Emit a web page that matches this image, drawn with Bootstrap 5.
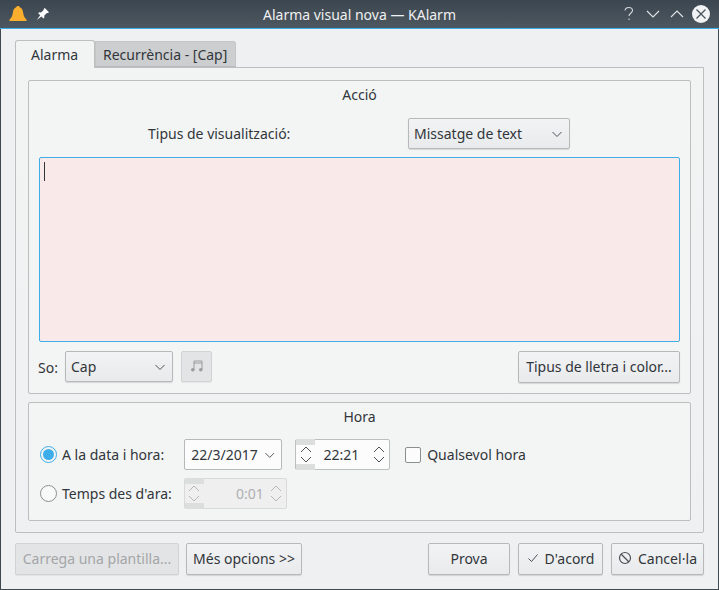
<!DOCTYPE html>
<html lang="ca">
<head>
  <meta charset="UTF-8" />
  <title>Alarma visual nova — KAlarm</title>
  <link href="https://cdn.jsdelivr.net/npm/bootstrap@5.3.0/dist/css/bootstrap.min.css" rel="stylesheet" />
  <style>
    html, body { height: 590px; overflow: hidden; }
    body { width: 719px; background: #eff0f1; color: #31363b; font-family: "Noto Sans", sans-serif; font-size: 14px; line-height: 19px; }
    .kwin { width: 719px; height: 590px; border: 1px solid #3f4952; border-top: 0; background: #eff0f1; }
    .titlebar { position: relative; height: 29px; margin: 0 -1px; padding: 0 9px 0 9px; background: linear-gradient(#3c4650, #4d5760); border-bottom: 1px solid #3daee9; color: #fcfcfc; }
    .titlebar-text { position: absolute; left: 0; right: 0; top: 5px; text-align: center; color: #eff0f1; }
    .tb-icons { gap: 9px; position: relative; }
    .dlg { padding: 11px 14px 0; }
    .nav-tabs.ktabs { border: 0; height: 28px; position: relative; z-index: 1; }
    .ktabs .nav-link { height: 26px; margin: 1px 0 0; padding: 3px 8px 0 7px; background: #cdcecf; border: 1px solid #c4c5c6; border-bottom: 1px solid #b9babb; border-radius: 0 3px 0 0; color: #31363b; font-size: 14px; line-height: 19px; }
    .ktabs .nav-link.active { height: 28px; margin: 0; width: 80px; padding: 4px 0 0 15px; background: #f2f3f3; border-color: #bcbebf; border-bottom: 0; border-radius: 3px 3px 0 0; color: #31363b; }
    .pane { height: 466px; margin-top: -1px; padding: 12px 12px 0; background: linear-gradient(#f2f3f3, #eff0f1); border: 1px solid #bcbebf; border-radius: 0 0 2px 2px; }
    .grp { background: #f3f4f4; border: 1px solid #bcbebf; border-radius: 2px; padding: 0 10px; }
    .grp-a { height: 314px; margin-bottom: 8px; }
    .grp-h { height: 119px; }
    .grp-title { height: 27px; padding-top: 4px; text-align: center; }
    .kbtn { display: flex; align-items: center; justify-content: center; height: 32px; padding: 0 0 2px; border: 1px solid #b6b8ba; border-radius: 2px; background: linear-gradient(#f2f3f4, #e9eaeb); box-shadow: 0 1px 1px rgba(0,0,0,.12); color: #31363b; font-size: 14px; line-height: 19px; gap: 6px; }
    .kbtn:disabled { color: #a3a6a9; opacity: 1; background: #e3e4e5; border-color: #d2d3d4; box-shadow: 0 1px 1px rgba(0,0,0,.06); }
    .kcombo { justify-content: space-between; padding: 0 6px 0 5px; height: 31px; }
    .kcombo.white { padding-left: 6px; background: #fcfcfc; box-shadow: none; }
    .vis-row { height: 31px; margin: 10px 0 8px; }
    .vis-label { width: 369px; padding-left: 109px; }
    .msg { height: 185px; padding: 4px; background: #fae9e9; border: 1px solid #3daee9; border-radius: 2px; }
    .caret-bar { width: 1px; height: 19px; background: #31363b; }
    .so-row { margin-top: 9px; height: 32px; }
    .so-label { width: 27px; margin-left: -1px; }
    .hora-row { height: 31px; }
    .kradio { width: 17px; height: 17px; margin-left: 1px; border: 1px solid #8b8e91; border-radius: 50%; background: #f8f9f9; flex: none; }
    .kradio.on { border-color: #3daee9; padding: 2px; background: #3daee9 content-box; }
    .radio-text { margin-left: 5px; }
    .kcheck { width: 16px; height: 16px; border: 1px solid #8b8e91; border-radius: 2px; background: #fcfcfc; flex: none; }
    .spin { position: relative; height: 31px; border: 1px solid #bcbebf; border-radius: 2px; background: #fcfcfc; color: #31363b; }
    .spin.off { background: #efefef; border-color: #d8d9da; color: #aeb0b2; }
    .spin-left { width: 19px; height: 31px; margin: -1px 0; display: flex; flex-direction: column; align-items: center; justify-content: center; gap: 3px; background: linear-gradient(#dcdddd 6px, transparent 6px, transparent 25px, #dcdddd 25px); }
    .spin-right { width: 20px; display: flex; flex-direction: column; align-items: center; gap: 3px; }
    .spin-value { flex: 1; text-align: right; }
    .mid-dot { margin: 0 .1px; }
    .foot { margin-top: 10px; }
  </style>
</head>
<body>
<div class="kwin">
  <!-- title bar -->
  <div class="titlebar d-flex align-items-center justify-content-between">
    <div class="titlebar-text">Alarma visual nova — KAlarm</div>
    <div class="d-flex align-items-center tb-icons">
      <svg width="18" height="18" viewBox="0 0 18 18"><path d="M9 1c1 0 1.500.6 1.700 1.200C13 3 13.800 5 14.200 8c.4 3 1.400 5 3.300 6.500V16H.5v-1.500C2.400 13 3.400 11 3.800 8 4.200 5 5 3 7.300 2.200 7.500 1.600 8 1 9 1z" fill="#fbae2d"/></svg>
      <svg width="14" height="14" viewBox="0 0 14 14"><path d="M8.800 1l4.200 4.200-1 .8-1-.1-2.700 2.700.1 1.900-1 1-2-2L.8 13l3.400-4.700-2-2 1-1 1.900.1L7.800 2.700 7.700 1.900z" fill="#fcfcfc"/></svg>
    </div>
    <div class="d-flex align-items-center" style="gap:8px;position:relative">
      <svg width="16" height="18" viewBox="0 0 16 18"><path d="M4 5.500c.3-2 1.900-3 3.800-3 2.100 0 3.700 1.200 3.700 3 0 2.700-3.500 2.700-3.500 5.500M8 13.500v1.500" fill="none" stroke="#d5d8da" stroke-width="1.100"/></svg>
      <svg width="16" height="16" viewBox="0 0 16 16"><path d="M2 5l6 6 6-6" fill="none" stroke="#e3e5e7" stroke-width="1.100"/></svg>
      <svg width="16" height="16" viewBox="0 0 16 16"><path d="M2 11l6-6 6 6" fill="none" stroke="#e3e5e7" stroke-width="1.100"/></svg>
      <svg width="18" height="18" viewBox="0 0 18 18" style="margin-left:-1px"><circle cx="9" cy="9" r="9" fill="#f2f3f4"/><path d="M4.500 4.500l9 9M13.500 4.500l-9 9" stroke="#4a545d" stroke-width="1.300"/></svg>
    </div>
  </div>

  <div class="dlg">
    <ul class="nav nav-tabs ktabs">
      <li class="nav-item"><a class="nav-link active" href="#">Alarma</a></li>
      <li class="nav-item"><a class="nav-link" href="#">Recurrència - [Cap]</a></li>
    </ul>
    <div class="pane">
      <!-- Acció -->
      <div class="grp grp-a">
        <div class="grp-title">Acció</div>
        <div class="d-flex align-items-center vis-row">
          <div class="vis-label">Tipus de visualització:</div>
          <button class="kbtn kcombo" style="width:162px">Missatge de text
            <svg width="12" height="12" viewBox="0 0 12 12"><path d="M1.500 4l4.500 4.500L10.500 4" fill="none" stroke="#4d5257" stroke-width="1"/></svg>
          </button>
        </div>
        <div class="msg"><div class="caret-bar"></div></div>
        <div class="d-flex align-items-start so-row">
          <div class="so-label align-self-center">So:</div>
          <button class="kbtn kcombo" style="width:108px">Cap
            <svg width="12" height="12" viewBox="0 0 12 12"><path d="M1.500 4l4.500 4.500L10.500 4" fill="none" stroke="#4d5257" stroke-width="1"/></svg>
          </button>
          <button class="kbtn ms-2" style="width:31px;height:31px" disabled>
            <svg width="14" height="14" viewBox="0 0 14 14"><path d="M4 10.500V2h8v8.500M4 4h8" fill="none" stroke="#9a9c9e"/><circle cx="2.800" cy="10.800" r="1.800" fill="#9a9c9e"/><circle cx="10.800" cy="10.800" r="1.800" fill="#9a9c9e"/></svg>
          </button>
          <button class="kbtn ms-auto" style="width:162px">Tipus de lletra i color...</button>
        </div>
      </div>
      <!-- Hora -->
      <div class="grp grp-h">
        <div class="grp-title" style="margin-bottom:9px">Hora</div>
        <div class="d-flex align-items-center hora-row">
          <span class="kradio on"></span>
          <span class="radio-text">A la data i hora:</span>
          <button class="kbtn kcombo white" style="width:98px;margin-left:20px">22/3/2017
            <svg width="12" height="12" viewBox="0 0 12 12"><path d="M1.500 4l4.500 4.500L10.500 4" fill="none" stroke="#4d5257" stroke-width="1"/></svg>
          </button>
          <div class="spin d-flex align-items-center" style="width:95px;margin-left:13px">
            <div class="spin-left">
              <svg width="12" height="7" viewBox="0 0 12 7"><path d="M1 6l5-5 5 5" fill="none" stroke="#4d5257"/></svg>
              <svg width="12" height="7" viewBox="0 0 12 7"><path d="M1 1l5 5 5-5" fill="none" stroke="#4d5257"/></svg>
            </div>
            <div class="spin-value">22:21</div>
            <div class="spin-right" style="margin-left:10px">
              <svg width="12" height="7" viewBox="0 0 12 7"><path d="M1 6l5-5 5 5" fill="none" stroke="#4d5257"/></svg>
              <svg width="12" height="7" viewBox="0 0 12 7"><path d="M1 1l5 5 5-5" fill="none" stroke="#4d5257"/></svg>
            </div>
          </div>
          <span class="kcheck" style="margin-left:15px"></span>
          <span style="margin-left:6px">Qualsevol hora</span>
        </div>
        <div class="d-flex align-items-center hora-row" style="margin-top:8px">
          <span class="kradio"></span>
          <span class="radio-text">Temps des d'ara:</span>
          <div class="spin off d-flex align-items-center" style="width:103px;margin-left:12px">
            <div class="spin-left">
              <svg width="12" height="7" viewBox="0 0 12 7"><path d="M1 6l5-5 5 5" fill="none" stroke="#b5b7b9"/></svg>
              <svg width="12" height="7" viewBox="0 0 12 7"><path d="M1 1l5 5 5-5" fill="none" stroke="#b5b7b9"/></svg>
            </div>
            <div class="spin-value">0:01</div>
            <div class="spin-right" style="margin-left:2px">
              <svg width="12" height="7" viewBox="0 0 12 7"><path d="M1 6l5-5 5 5" fill="none" stroke="#b5b7b9"/></svg>
              <svg width="12" height="7" viewBox="0 0 12 7"><path d="M1 1l5 5 5-5" fill="none" stroke="#b5b7b9"/></svg>
            </div>
          </div>
        </div>
      </div>
    </div>
    <!-- dialog buttons -->
    <div class="d-flex foot">
      <button class="kbtn" style="width:164px" disabled>Carrega una plantilla...</button>
      <button class="kbtn" style="width:116px;margin-left:7px">Més opcions &gt;&gt;</button>
      <button class="kbtn ms-auto" style="width:82px">Prova</button>
      <button class="kbtn" style="width:85px;margin-left:8px">
        <svg width="12" height="12" viewBox="0 0 12 12"><path d="M1.500 6.500l3 3 6-7" fill="none" stroke="#4d5257"/></svg>
        D'acord
      </button>
      <button class="kbtn" style="width:93px;margin-left:8px">
        <svg width="14" height="14" viewBox="0 0 14 14"><circle cx="7" cy="7" r="5.500" fill="none" stroke="#4d5257" stroke-width="1.200"/><path d="M3 3l8 8" stroke="#4d5257" stroke-width="1.200"/></svg>
        <span>Cancel<span class="mid-dot">·</span>la</span>
      </button>
    </div>
  </div>
</div>
<script src="https://cdn.jsdelivr.net/npm/bootstrap@5.3.0/dist/js/bootstrap.bundle.min.js"></script>
</body>
</html>
